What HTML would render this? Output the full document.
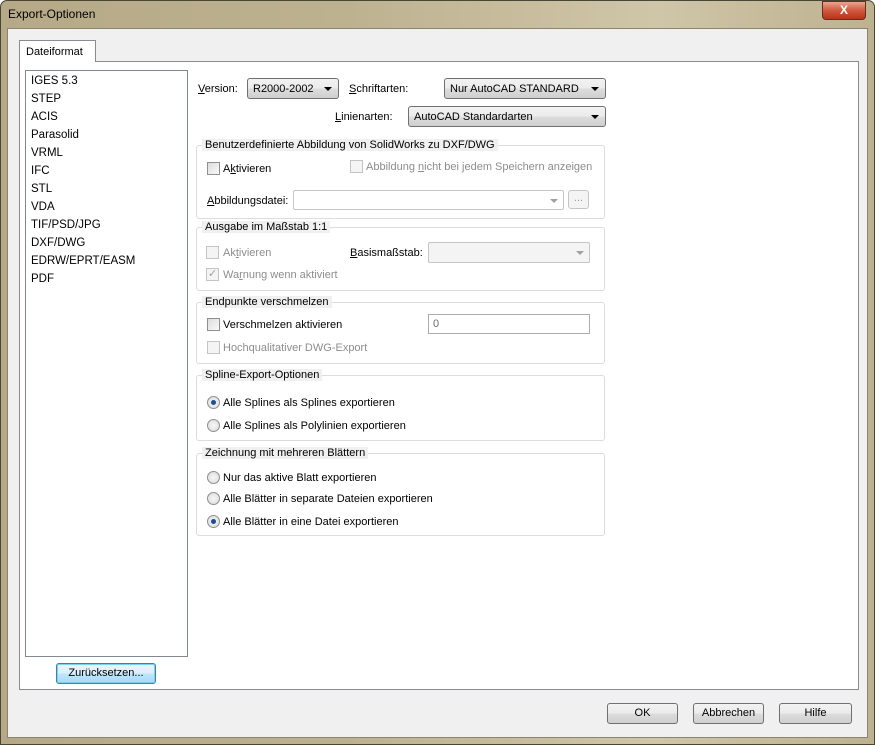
<!DOCTYPE html>
<html><head><meta charset="utf-8"><style>
*{box-sizing:border-box}
body{margin:0;width:875px;height:745px;overflow:hidden;font-family:"Liberation Sans",sans-serif;font-size:11px;color:#000;background:#fff}
.a{position:absolute}
.t{position:absolute;margin-top:2px}
.frame{left:0;top:0;width:875px;height:745px;background:linear-gradient(90deg,#b5a987,#bdb290 40%,#cfc6a8 75%,#bdb290);border:1px solid #4a4636;border-radius:7px 7px 0 0}
.client{left:7px;top:28px;width:861px;height:710px;background:#f0f0f0;border:1px solid #8a8470}
.close{left:822px;top:1px;width:44px;height:19px;border:1px solid #6b2a1c;border-radius:0 0 4px 4px;background:linear-gradient(#e9a693,#d0583d 50%,#b7341a);color:#fff;font-weight:bold;font-size:12px;text-align:center;line-height:17px}
.panel{left:19px;top:61px;width:840px;height:629px;background:#fff;border:1px solid #898c95}
.tab{left:19px;top:40px;width:77px;height:22px;background:#fff;border:1px solid #898c95;border-bottom:none;padding:5px 0 0 6px}
.list{left:25px;top:70px;width:163px;height:587px;border:1px solid #828790;background:#fff}
.list div{position:absolute;left:5px;font-size:11.5px;margin-top:2px}
.btn{border:1px solid #707070;border-radius:3px;background:linear-gradient(#f2f2f2,#ebebeb 50%,#dddddd 51%,#cfcfcf);text-align:center;line-height:19px}
.blue{border-color:#3c7fb1;background:linear-gradient(#eaf6fd,#d9f0fc 50%,#bee6fd 51%,#a7d9f5);box-shadow:inset 0 0 0 1px #7fd0ef}
.cmb{border:1px solid #707070;border-radius:3px;background:linear-gradient(#f2f2f2,#ebebeb 50%,#dddddd 51%,#cfcfcf);padding:4px 0 0 5px;height:21px}
.cmb:after{content:"";position:absolute;right:6px;top:8px;border:4px solid transparent;border-top:4px solid #000;border-bottom:none}
.dcmb{border:1px solid #c5c5c5;border-radius:2px;background:#f4f4f4}
.dcmb:after{content:"";position:absolute;right:5px;top:8px;border:4px solid transparent;border-top:4px solid #a0a0a0;border-bottom:none}
.grp{border:1px solid #dcdcdc;border-radius:3px}
.gt{background:#f0f0f0;padding:0 3px;position:absolute;top:-7px;left:5px;white-space:nowrap}
.cb{width:13px;height:13px;border:1px solid #8e8f8f;background:linear-gradient(135deg,#dcdcdc,#fafafa)}
.cbd{width:13px;height:13px;border:1px solid #c4c4c4;background:#f4f4f4}
.rb{width:13px;height:13px;border:1px solid #8e8f8f;border-radius:50%;background:radial-gradient(#f8f8f8,#d8d8d8)}
.rb.on:after{content:"";position:absolute;left:3px;top:3px;width:5px;height:5px;border-radius:50%;background:#1a4f93}
.dis{color:#8d8d8d}
u{text-decoration:underline}
</style></head><body>
<div class="a frame"></div>
<div class="a" style="left:8px;top:7px;font-size:12px">Export-Optionen</div>
<div class="a close">X</div>
<div class="a client"></div>
<div class="a panel"></div>
<div class="a tab">Dateiformat</div>
<div class="a list">
<div style="top:2px">IGES 5.3</div><div style="top:20px">STEP</div><div style="top:38px">ACIS</div><div style="top:56px">Parasolid</div><div style="top:74px">VRML</div><div style="top:92px">IFC</div><div style="top:110px">STL</div><div style="top:128px">VDA</div><div style="top:146px">TIF/PSD/JPG</div><div style="top:164px">DXF/DWG</div><div style="top:182px">EDRW/EPRT/EASM</div><div style="top:200px">PDF</div>
</div>
<div class="a btn blue" style="left:56px;top:663px;width:100px;height:21px">Zurücksetzen...</div>

<div class="t" style="left:198px;top:81px"><u>V</u>ersion:</div>
<div class="a cmb" style="left:247px;top:78px;width:92px">R2000-2002</div>
<div class="t" style="left:349px;top:81px"><u>S</u>chriftarten:</div>
<div class="a cmb" style="left:444px;top:78px;width:162px">Nur AutoCAD STANDARD</div>
<div class="t" style="left:335px;top:109px"><u>L</u>inienarten:</div>
<div class="a cmb" style="left:408px;top:106px;width:198px">AutoCAD Standardarten</div>

<div class="a grp" style="left:196px;top:145px;width:409px;height:74px"><span class="gt">Benutzerdefinierte Abbildung von SolidWorks zu DXF/DWG</span></div>
<div class="a cb" style="left:207px;top:162px"></div><div class="t" style="left:223px;top:161px">A<u>k</u>tivieren</div>
<div class="a cbd" style="left:350px;top:160px"></div><div class="t dis" style="left:366px;top:159px">Abbildung <u>n</u>icht bei jedem Speichern anzeigen</div>
<div class="t" style="left:207px;top:193px"><u>A</u>bbildungsdatei:</div>
<div class="a dcmb" style="left:293px;top:190px;width:271px;height:20px;background:#fff"></div>
<div class="a" style="left:568px;top:190px;width:21px;height:19px;border:1px solid #c5c5c5;border-radius:3px;color:#999;text-align:center;line-height:14px;background:#f4f4f4">...</div>

<div class="a grp" style="left:196px;top:227px;width:409px;height:64px"><span class="gt">Ausgabe im Maßstab 1:1</span></div>
<div class="a cbd" style="left:206px;top:246px"></div><div class="t dis" style="left:223px;top:245px">Ak<u>t</u>ivieren</div>
<div class="t" style="left:350px;top:245px"><u>B</u>asismaßstab:</div>
<div class="a dcmb" style="left:428px;top:242px;width:162px;height:21px"></div>
<div class="a cbd" style="left:206px;top:268px;color:#a0a0a0;font-size:11px;line-height:11px;text-align:center">✓</div><div class="t dis" style="left:223px;top:267px">Wa<u>r</u>nung wenn aktiviert</div>

<div class="a grp" style="left:196px;top:302px;width:409px;height:62px"><span class="gt">Endpunkte verschmelzen</span></div>
<div class="a cb" style="left:207px;top:318px"></div><div class="t" style="left:223px;top:317px">Verschmelzen aktivieren</div>
<div class="a" style="left:428px;top:314px;width:162px;height:20px;border:1px solid #abadb3;background:#fff;padding:3px 4px;color:#6d6d6d">0</div>
<div class="a cbd" style="left:207px;top:341px"></div><div class="t dis" style="left:223px;top:340px">Hochqualitativer DWG-Export</div>

<div class="a grp" style="left:196px;top:375px;width:409px;height:66px"><span class="gt">Spline-Export-Optionen</span></div>
<div class="a rb on" style="left:207px;top:396px"></div><div class="t" style="left:223px;top:395px">Alle Splines als Splines exportieren</div>
<div class="a rb" style="left:207px;top:419px"></div><div class="t" style="left:223px;top:418px">Alle Splines als Polylinien exportieren</div>

<div class="a grp" style="left:196px;top:453px;width:409px;height:83px"><span class="gt">Zeichnung mit mehreren Blättern</span></div>
<div class="a rb" style="left:207px;top:471px"></div><div class="t" style="left:223px;top:470px">Nur das aktive Blatt exportieren</div>
<div class="a rb" style="left:207px;top:492px"></div><div class="t" style="left:223px;top:491px">Alle Blätter in separate Dateien exportieren</div>
<div class="a rb on" style="left:207px;top:515px"></div><div class="t" style="left:223px;top:514px">Alle Blätter in eine Datei exportieren</div>

<div class="a btn" style="left:607px;top:703px;width:71px;height:21px">OK</div>
<div class="a btn" style="left:693px;top:703px;width:71px;height:21px">Abbrechen</div>
<div class="a btn" style="left:779px;top:703px;width:73px;height:21px">Hilfe</div>
</body></html>
